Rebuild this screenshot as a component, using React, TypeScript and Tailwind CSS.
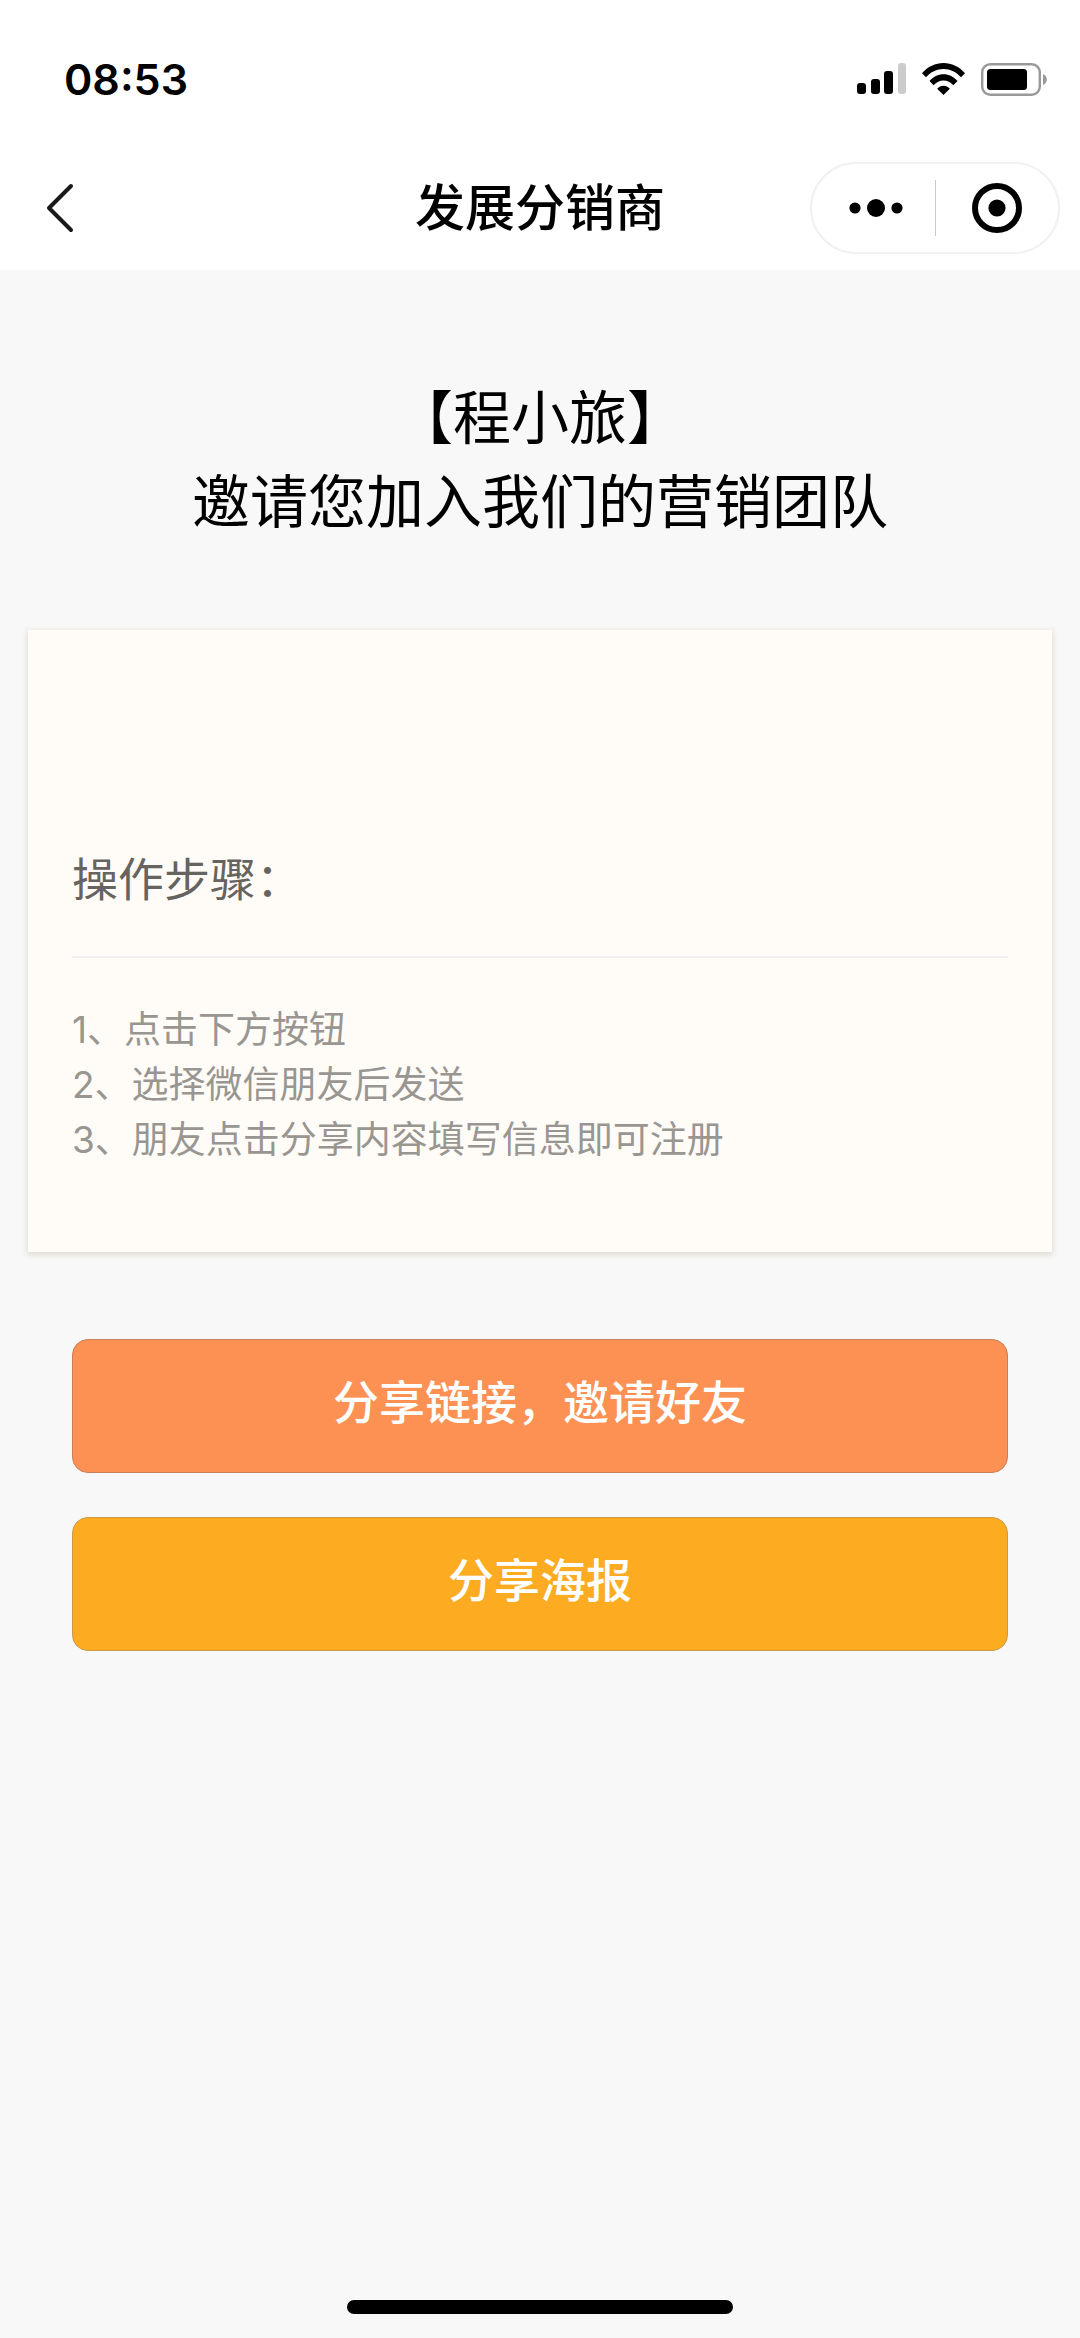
const steps = [
  "1、点击下方按钮",
  "2、选择微信朋友后发送",
  "3、朋友点击分享内容填写信息即可注册",
];

function StatusBar() {
  return (
    <div className="flex h-[158px] items-center justify-between pl-16 pr-8">
      <span className="text-[43px] leading-none font-semibold">08:53</span>
      <div className="flex items-center gap-4">
        <svg width="49" height="32" viewBox="0 0 49 32" aria-label="信号">
          <rect x="0" y="20" width="9" height="11" rx="3" />
          <rect x="14" y="16" width="9" height="15" rx="3" />
          <rect x="27" y="8" width="9" height="23" rx="3" />
          <rect x="41" y="0" width="8" height="31" rx="3" fill="#cccccc" />
        </svg>
        <svg width="43" height="32" viewBox="0 0 43 32" aria-label="无线网络">
          <path d="M0 10.2C5.700 3.700 13.400 0 21.500 0S37.300 3.700 43 10.200L39 14.300C34.400 9.200 28.200 6.100 21.500 6.100S8.600 9.200 4 14.300Z" />
          <path d="M7.500 18C11.200 13.800 16.100 11.300 21.500 11.300S31.800 13.800 35.500 18L31.300 22.200C28.700 19.200 25.300 17.400 21.500 17.400S14.300 19.200 11.700 22.200Z" />
          <path d="M15.200 25.800C16.900 23.800 19 22.700 21.500 22.700S26.100 23.800 27.800 25.800L21.500 32Z" />
        </svg>
        <svg width="67" height="33" viewBox="0 0 67 33" aria-label="电量">
          <rect x="1.200" y="1.200" width="57.600" height="30.600" rx="8" fill="none" stroke="#999999" strokeWidth="2.400" />
          <rect x="6" y="6" width="40" height="21" rx="3.500" />
          <path d="M62 11C67 13 67 20 62 22Z" fill="#999999" />
        </svg>
      </div>
    </div>
  );
}

function NavBar() {
  return (
    <nav className="grid grid-cols-[1fr_auto_1fr] items-center px-5 pt-1 pb-4">
      <button type="button" aria-label="返回" className="w-fit px-6">
        <svg width="30" height="50" viewBox="0 0 30 50" fill="none" stroke="#1a1a1a" strokeWidth="4" strokeLinecap="round" strokeLinejoin="round">
          <path d="M27 3L5 25L27 47" />
        </svg>
      </button>
      <h1 className="text-[50px] leading-none font-medium">发展分销商</h1>
      <div className="flex h-[92px] w-[250px] items-center justify-self-end rounded-full border-2 border-[#f1f1f1]">
        <button type="button" aria-label="更多" className="flex w-[123px] items-center justify-center pl-1">
          <svg width="54" height="18" viewBox="0 0 54 18">
            <circle cx="6" cy="9" r="5.600" />
            <circle cx="27" cy="9" r="9" />
            <circle cx="48" cy="9" r="5.600" />
          </svg>
        </button>
        <span className="h-14 w-px bg-[#cccccc]" />
        <button type="button" aria-label="关闭" className="flex flex-1 items-center justify-center">
          <svg width="50" height="50" viewBox="0 0 50 50">
            <circle cx="25" cy="25" r="22" fill="none" stroke="#000" strokeWidth="6" />
            <circle cx="25" cy="25" r="8.600" />
          </svg>
        </button>
      </div>
    </nav>
  );
}

export default function App() {
  return (
    <div className="flex min-h-screen flex-col bg-[#f8f8f8] font-['Inter','Noto_Sans_CJK_SC',sans-serif] text-black">
      <header className="bg-white">
        <StatusBar />
        <NavBar />
      </header>

      <main>
        <h2 className="pt-[106px] text-center text-[58px] leading-[84px]">
          【程小旅】
          <br />
          邀请您加入我们的营销团队
        </h2>

        <section className="mx-7 mt-[86px] bg-[#fffcf7] px-11 pt-[213px] pb-[85px] shadow-[0_2px_6px_1px_#e0dcd4]">
          <h3 className="border-b-2 border-[#eeeeee] pb-[41px] text-[46px] leading-[72px] text-[#666460]">
            操作步骤：
          </h3>
          <div className="pt-11 text-[37px] leading-[55px] text-[#999692]">
            {steps.map((step) => (
              <p key={step}>{step}</p>
            ))}
          </div>
        </section>

        <div className="flex flex-col gap-11 px-[72px] pt-[87px] text-[46px] font-medium text-white">
          <button type="button" className="h-[134px] rounded-2xl border border-[#c8805a] bg-[#fd9154] pb-2">
            分享链接，邀请好友
          </button>
          <button type="button" className="h-[134px] rounded-2xl border border-[#cb9a48] bg-[#fdac22] pb-2">
            分享海报
          </button>
        </div>
      </main>

      <div className="mx-auto mt-auto mb-6 h-[14px] w-[386px] rounded-full bg-black" />
    </div>
  );
}
